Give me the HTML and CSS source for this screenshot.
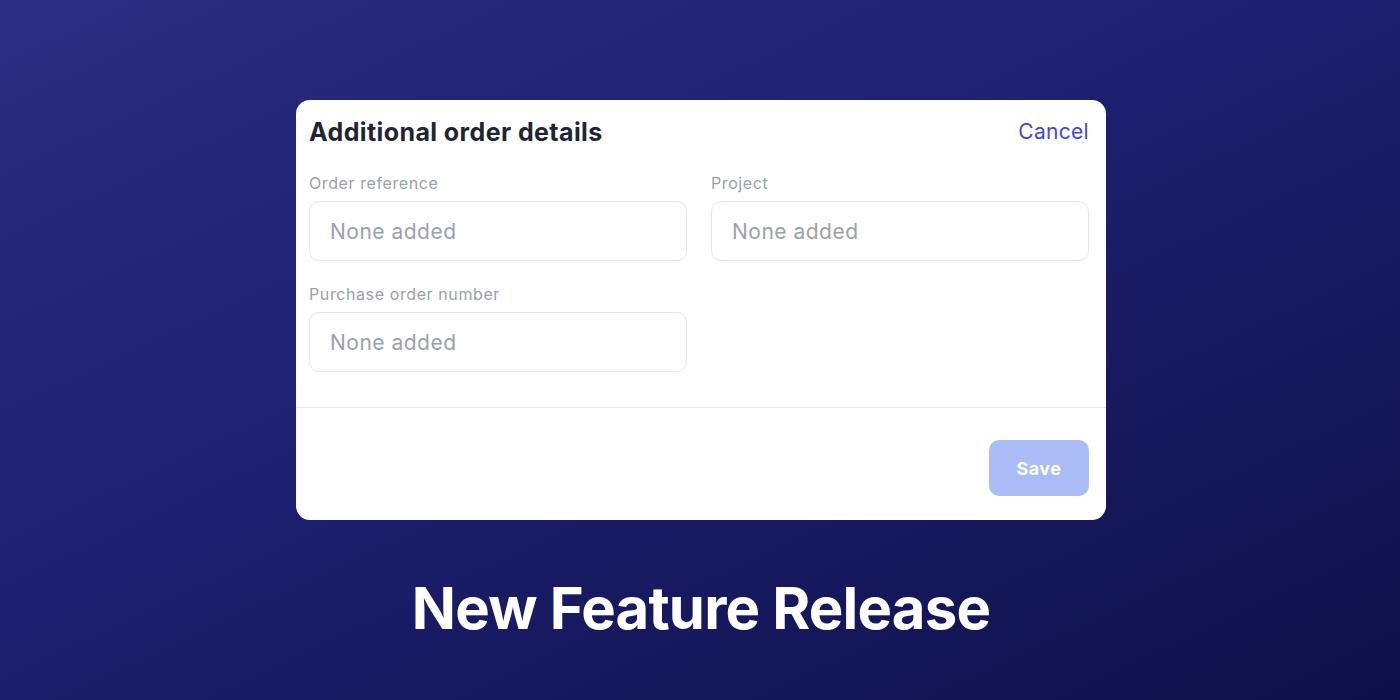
FILE: index.html
```html
<!DOCTYPE html>
<html lang="en">
<head>
<meta charset="utf-8">
<title>New Feature Release</title>
<link rel="stylesheet" href="styles.css">
</head>
<body>
<main class="stage">
  <section class="card">
    <header class="card-head">
      <h2 class="card-title">Additional order details</h2>
      <a class="cancel" href="#">Cancel</a>
    </header>
    <div class="form-grid">
      <div class="field">
        <label class="field-label">Order reference</label>
        <div class="field-input">None added</div>
      </div>
      <div class="field">
        <label class="field-label">Project</label>
        <div class="field-input">None added</div>
      </div>
      <div class="field">
        <label class="field-label">Purchase order number</label>
        <div class="field-input">None added</div>
      </div>
    </div>
    <footer class="card-foot">
      <button class="save" type="button">Save</button>
    </footer>
  </section>
  <h1 class="headline">New Feature Release</h1>
</main>
</body>
</html>
```
FILE: styles.css
```css
* { box-sizing: border-box; }
html, body { margin: 0; padding: 0; }
body {
  width: 1400px;
  height: 700px;
  overflow: hidden;
  background: linear-gradient(155deg, #2b2e82 0%, #1d206f 45%, #0e1049 100%);
  font-family: Inter, "Liberation Sans", sans-serif;
}
.stage {
  display: flex;
  flex-direction: column;
  align-items: center;
  padding-top: 100px;
  padding-left: 2px;
}
.card {
  width: 810px;
  height: 420px;
  background: #ffffff;
  border-radius: 14px;
  display: flex;
  flex-direction: column;
}
.card-head {
  display: flex;
  justify-content: space-between;
  align-items: center;
  padding: 17px 17px 0 13px;
}
.card-title {
  margin: 0;
  font-size: 25px;
  line-height: 30px;
  font-weight: 700;
  color: #1f2533;
  letter-spacing: 0.4px;
}
.cancel {
  font-size: 21px;
  line-height: 30px;
  color: #4547d0;
  text-decoration: none;
  letter-spacing: 0.3px;
}
.form-grid {
  display: grid;
  grid-template-columns: 378px 378px;
  column-gap: 24px;
  row-gap: 23px;
  padding: 26px 17px 35px 13px;
  border-bottom: 1px solid #e9eaef;
}
.field {
  display: flex;
  flex-direction: column;
  gap: 8px;
}
.field-label {
  font-size: 16px;
  line-height: 20px;
  color: #9aa0ab;
  letter-spacing: 0.6px;
}
.field-input {
  height: 60px;
  border: 1px solid #e5e7ec;
  border-radius: 10px;
  padding: 0 20px;
  display: flex;
  align-items: center;
  font-size: 21px;
  color: #9ba1ac;
  letter-spacing: 0.5px;
}
.card-foot {
  display: flex;
  justify-content: flex-end;
  padding: 32px 17px 0 13px;
}
.save {
  width: 100px;
  height: 56px;
  border: none;
  border-radius: 10px;
  background: #aabcf5;
  color: #ffffff;
  font-family: Inter, "Liberation Sans", sans-serif;
  font-size: 18px;
  font-weight: 700;
  letter-spacing: 0.5px;
}
.headline {
  margin: 53px 0 0;
  font-size: 58px;
  line-height: 70px;
  font-weight: 700;
  color: #ffffff;
  letter-spacing: -0.8px;
}
```
